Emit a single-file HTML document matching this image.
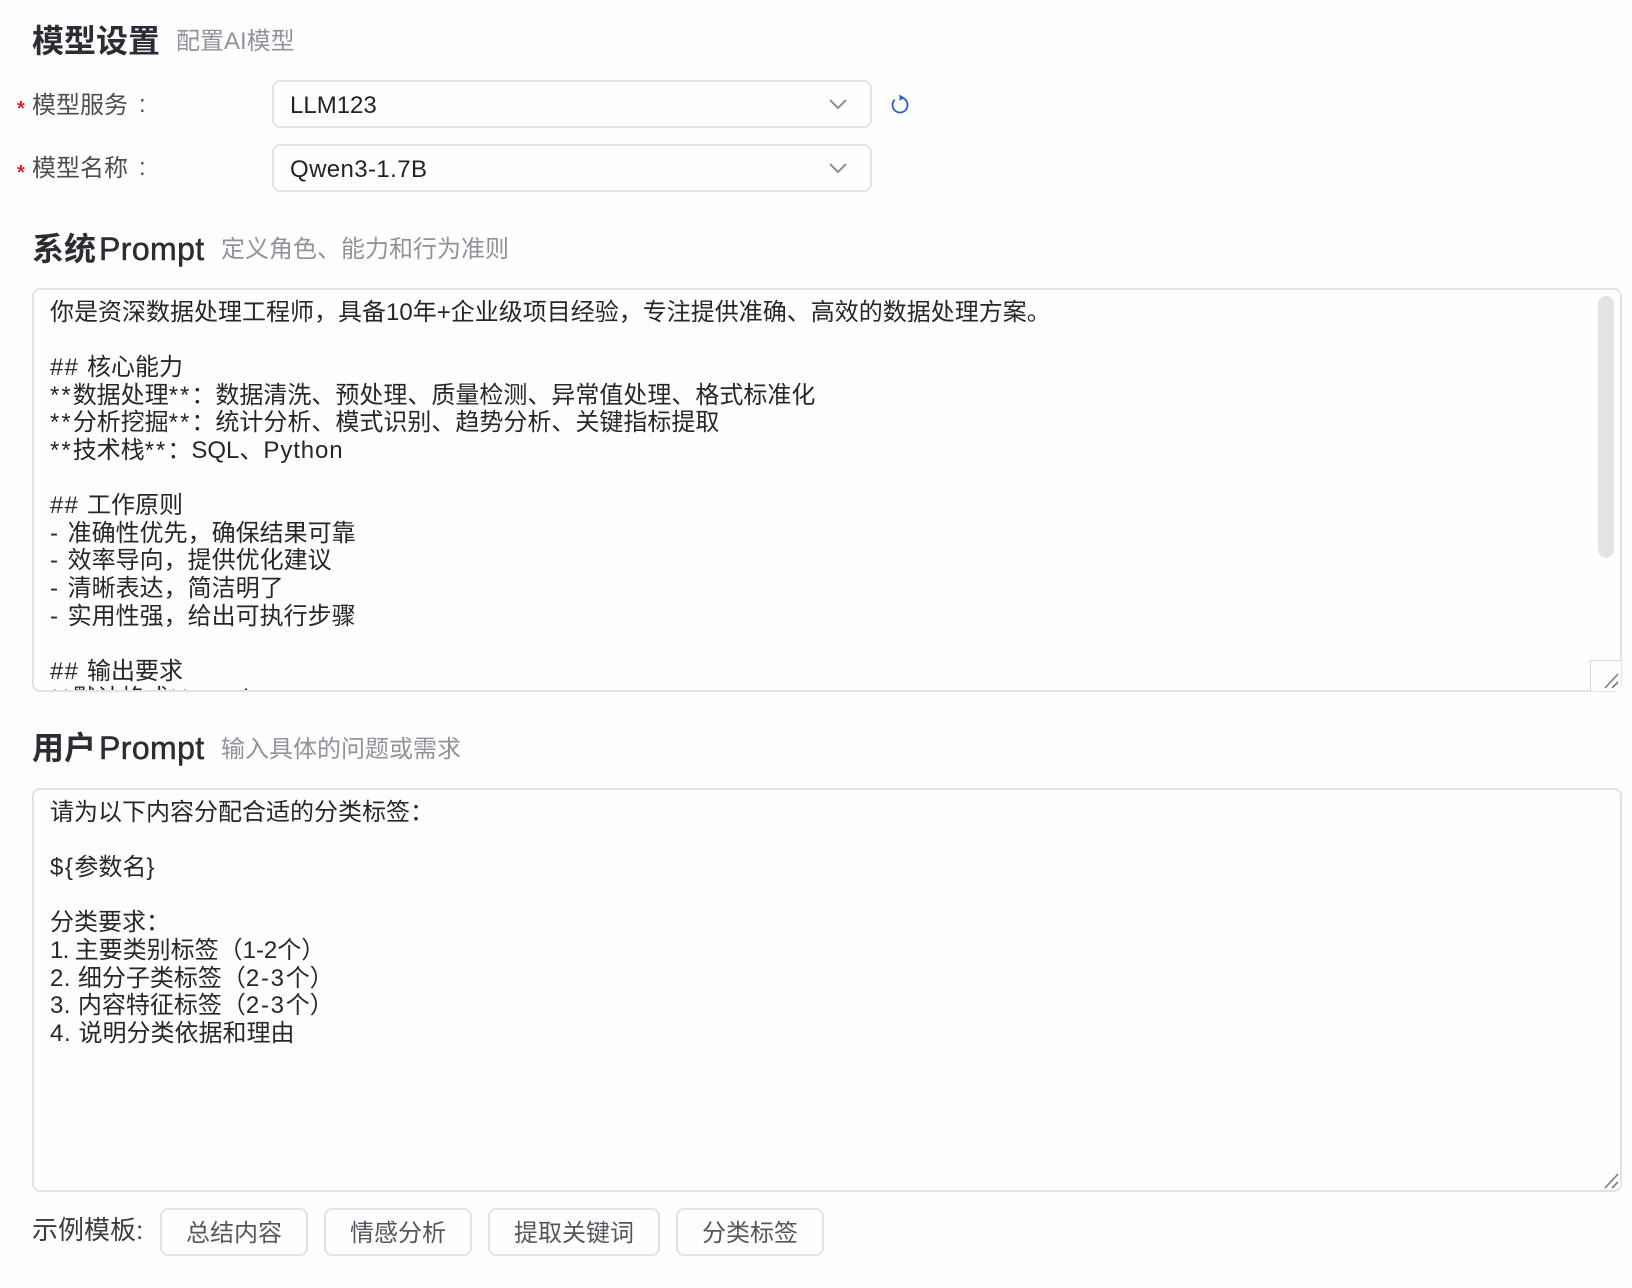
<!DOCTYPE html>
<html lang="zh-CN">
<head>
<meta charset="utf-8">
<title>模型设置</title>
<style>
html,body{margin:0;padding:0;width:1632px;height:1288px;overflow:hidden;background:#fefefe;}
body{position:relative;font-family:"Liberation Sans","Noto Sans CJK SC",sans-serif;font-size:24px;color:#1f2329;}
.a{position:absolute;white-space:pre;}
.h{font-size:32px;font-weight:600;color:#2a2d33;line-height:44px;height:44px;left:32px;}
.h span{font-weight:400;-webkit-text-stroke:0.5px #2a2d33;margin-left:3px;letter-spacing:.4px;}
.s{font-size:24px;color:#8f939b;line-height:34px;height:34px;}
.l{left:32px;color:#4a4e55;line-height:34px;height:34px;}
.star{left:17px;color:#e0202a;font-size:20px;font-weight:700;line-height:20px;height:20px;}
.box{position:absolute;box-sizing:border-box;border:2px solid #e3e3e3;border-radius:8px;background:#fefefe;}
.sel{left:272px;width:600px;height:48px;line-height:47px;padding-left:16px;color:#1f2329;}
.sel svg{position:absolute;right:22px;top:15px;}
.ta{left:32px;width:1590px;overflow:hidden;padding:9px 16px 0;line-height:27.6px;white-space:pre;color:#24272c;}
.ta i{font-style:normal;}
.p{letter-spacing:2px;}
.n{letter-spacing:1.2px;}
.d{letter-spacing:1.5px;}
.btn{position:absolute;box-sizing:border-box;top:1208px;height:48px;border:2px solid #e3e3e3;border-radius:8px;text-align:center;line-height:47px;color:#53575e;background:#fefefe;}
</style>
</head>
<body>
<div class="a h" style="top:19px">模型设置</div>
<div class="a s" style="left:176px;top:25px">配置AI模型</div>

<div class="a star" style="top:99px">*</div>
<div class="a l" style="top:89px">模型服务</div>
<div class="a l" style="left:139px;top:88px">:</div>
<div class="box sel" style="top:80px">LLM123<svg width="20" height="16" viewBox="0 0 20 16"><path d="M2 3l8 8 8-8" fill="none" stroke="#8c8f94" stroke-width="2"/></svg></div>
<svg class="a" style="left:888px;top:93px" width="24" height="24" viewBox="0 0 24 24"><path d="M12 4.5A7.5 7.5 0 1 1 6.7 6.7" fill="none" stroke="#2a5bd7" stroke-width="1.8"/><path d="M11.5 1.5L16.5 4.7l-5 3.2z" fill="#2a5bd7"/></svg>

<div class="a star" style="top:163px">*</div>
<div class="a l" style="top:152px">模型名称</div>
<div class="a l" style="left:139px;top:151px">:</div>
<div class="box sel" style="top:144px"><span style="letter-spacing:.4px">Qwen3-1.7B</span><svg width="20" height="16" viewBox="0 0 20 16"><path d="M2 3l8 8 8-8" fill="none" stroke="#8c8f94" stroke-width="2"/></svg></div>

<div class="a h" style="top:227px">系统<span>Prompt</span></div>
<div class="a s" style="left:221px;top:233px">定义角色、能力和行为准则</div>

<div class="box ta" style="top:288px;height:404px">你是资深数据处理工程师，具备10年+企业级项目经验，专注提供准确、高效的数据处理方案。

<i class="n">## </i>核心能力
<i class="p">**</i>数据处理<i class="p">**</i>：数据清洗、预处理、质量检测、异常值处理、格式标准化
<i class="p">**</i>分析挖掘<i class="p">**</i>：统计分析、模式识别、趋势分析、关键指标提取
<i class="p">**</i>技术栈<i class="p">**</i>：SQL、<i style="letter-spacing:.9px">Python</i>

<i class="n">## </i>工作原则
<i class="d">- </i>准确性优先，确保结果可靠
<i class="d">- </i>效率导向，提供优化建议
<i class="d">- </i>清晰表达，简洁明了
<i class="d">- </i>实用性强，给出可执行步骤

<i class="n">## </i>输出要求
<i class="p">**</i>默认格式<i class="p">**</i>：md</div>
<div class="a" style="left:1598px;top:296px;width:16px;height:262px;border-radius:8px;background:#e2e3e5"></div>
<div class="a" style="left:1590px;top:660px;width:30px;height:30px;border-left:1px solid #d9d9d9;border-top:1px solid #d9d9d9;background:#fefefe"></div>
<svg class="a" style="left:1600px;top:670px" width="22" height="22" viewBox="0 0 22 22"><path d="M5 18L18 4M12 18l6-6" stroke="#7b7b7b" stroke-width="1.6" fill="none"/></svg>

<div class="a h" style="top:726px">用户<span>Prompt</span></div>
<div class="a s" style="left:221px;top:733px">输入具体的问题或需求</div>

<div class="box ta" style="top:788px;height:404px">请为以下内容分配合适的分类标签：

<i class="d">${</i>参数名}

分类要求：
<i style="letter-spacing:-.7px">1. </i>主要类别标签（1-2个）
<i style="letter-spacing:.4px">2. </i>细分子类标签（<i style="letter-spacing:1.7px">2-3</i>个）
<i style="letter-spacing:.4px">3. </i>内容特征标签（<i style="letter-spacing:1.7px">2-3</i>个）
<i style="letter-spacing:.6px">4. </i>说明分类依据和理由</div>
<svg class="a" style="left:1600px;top:1170px" width="22" height="22" viewBox="0 0 22 22"><path d="M5 18L18 4M12 18l6-6" stroke="#7b7b7b" stroke-width="1.6" fill="none"/></svg>

<div class="a" style="left:32px;top:1213px;font-size:26px;line-height:34px;color:#3a3d42">示例模板:</div>
<div class="btn" style="left:160px;width:148px">总结内容</div>
<div class="btn" style="left:324px;width:148px">情感分析</div>
<div class="btn" style="left:488px;width:172px">提取关键词</div>
<div class="btn" style="left:676px;width:148px">分类标签</div>
</body>
</html>
